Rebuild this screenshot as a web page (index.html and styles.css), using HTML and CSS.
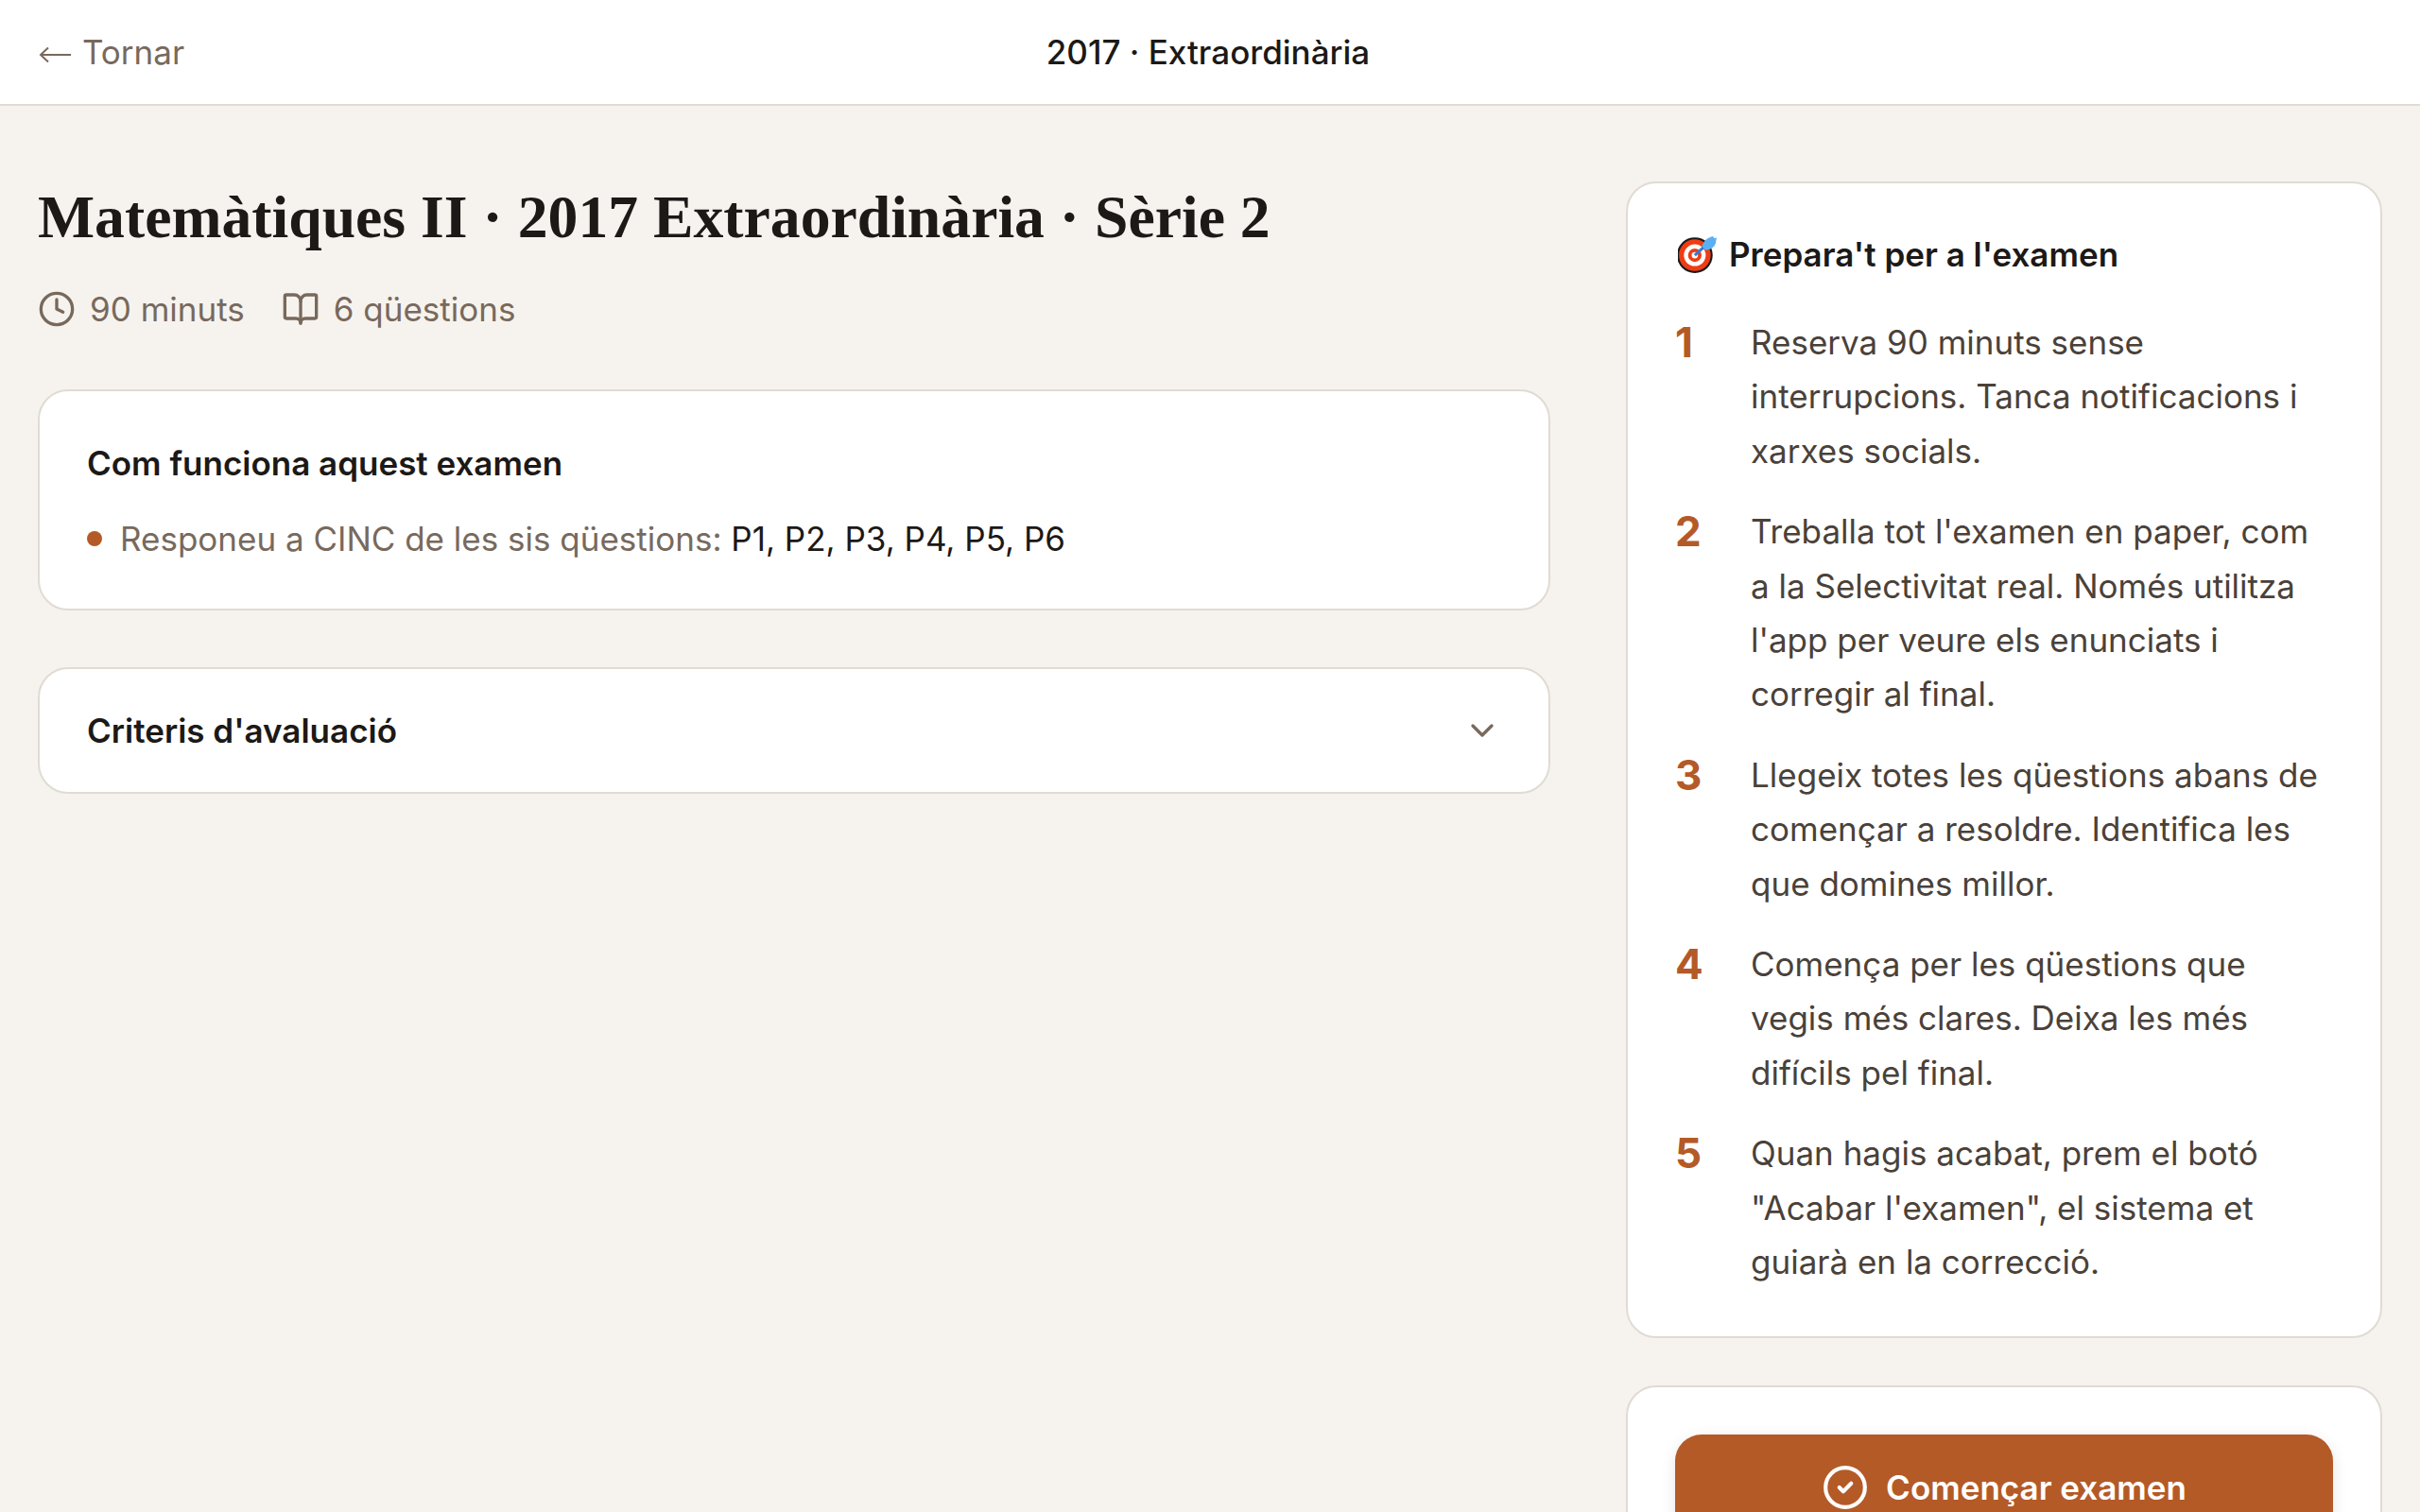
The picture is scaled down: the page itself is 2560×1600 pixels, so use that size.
FILE: index.html
```html
<!DOCTYPE html>
<html lang="ca">
<head>
<meta charset="UTF-8" />
<meta name="viewport" content="width=device-width, initial-scale=1" />
<title>Matemàtiques II · 2017 Extraordinària · Sèrie 2</title>
<link rel="stylesheet" href="styles.css">
</head>
<body>

<header class="topbar">
  <a class="back" href="#">
    <svg class="back-arrow" viewBox="0 0 34 18"><path d="M34 9H2M10 1.5 2 9l8 7.5"/></svg>
    Tornar
  </a>
  <div class="topbar-title">2017 · Extraordinària</div>
</header>

<main class="layout">
  <section class="main-col">
    <h1>Matemàtiques II · 2017 Extraordinària · Sèrie 2</h1>
    <div class="meta">
      <span class="meta-item">
        <svg class="meta-icon" viewBox="0 0 24 24"><circle cx="12" cy="12" r="10"/><path d="M12 6v6l4 2"/></svg>
        90 minuts
      </span>
      <span class="meta-item">
        <svg class="meta-icon" viewBox="0 0 24 24"><path d="M12 7v14"/><path d="M3 18a1 1 0 0 1-1-1V4a1 1 0 0 1 1-1h5a4 4 0 0 1 4 4 4 4 0 0 1 4-4h5a1 1 0 0 1 1 1v13a1 1 0 0 1-1 1h-6a3 3 0 0 0-3 3 3 3 0 0 0-3-3z"/></svg>
        6 qüestions
      </span>
    </div>

    <div class="card how">
      <h2>Com funciona aquest examen</h2>
      <ul class="rules">
        <li>Responeu a CINC de les sis qüestions: <span class="rule-list">P1, P2, P3, P4, P5, P6</span></li>
      </ul>
    </div>

    <div class="card criteria">
      <h2>Criteris d'avaluació</h2>
      <svg class="chevron" viewBox="0 0 24 24"><path d="m6 9 6 6 6-6"/></svg>
    </div>
  </section>

  <aside class="side-col">
    <div class="card prep">
      <h2 class="prep-title">
        <svg class="target" viewBox="0 0 40 40">
          <circle cx="17" cy="21" r="18" fill="#1a1a1a"/>
          <circle cx="17" cy="21" r="16" fill="#ee3d14"/>
          <circle cx="17" cy="21" r="11" fill="#fff"/>
          <circle cx="17" cy="21" r="6.8" fill="#ee3d14"/>
          <circle cx="17" cy="21" r="3.2" fill="#fff"/>
          <path d="M17 21 28 11" stroke="#2f7fd0" stroke-width="3"/>
          <path d="M24 12Q27 4 35 2L37 4 39 3 38 9Q36 15 28 16Z" fill="#5ab0f5"/>
        </svg>
        Prepara't per a l'examen
      </h2>
      <ol class="steps">
        <li><span class="step-num">1</span><p>Reserva 90 minuts sense interrupcions. Tanca notificacions i xarxes socials.</p></li>
        <li><span class="step-num">2</span><p>Treballa tot l'examen en paper, com a la Selectivitat real. Només utilitza l'app per veure els enunciats i corregir al final.</p></li>
        <li><span class="step-num">3</span><p>Llegeix totes les qüestions abans de començar a resoldre. Identifica les que domines millor.</p></li>
        <li><span class="step-num">4</span><p>Comença per les qüestions que vegis més clares. Deixa les més difícils pel final.</p></li>
        <li><span class="step-num">5</span><p>Quan hagis acabat, prem el botó "Acabar l'examen", el sistema et guiarà en la correcció.</p></li>
      </ol>
    </div>

    <div class="card start">
      <button class="start-btn">
        <svg class="start-icon" viewBox="0 0 24 24"><circle cx="12" cy="12" r="10"/><path d="m9 12 2 2 4-4"/></svg>
        Començar examen
      </button>
    </div>
  </aside>
</main>

</body>
</html>
```

FILE: styles.css
```css
html, body {
  height: 100%;
  overflow: hidden;
}
body {
  margin: 0;
  background-color: #f6f3ee;
  color: #1c1917;
  font-family: Inter, "Liberation Sans", sans-serif;
  font-size: 35px;
}
.topbar {
  position: relative;
  display: flex;
  align-items: center;
  justify-content: center;
  height: 110px;
  padding-right: 4px;
  background-color: #fff;
  border-bottom: 2px solid #e0dbd3;
}
.back {
  position: absolute;
  left: 41px;
  display: flex;
  align-items: center;
  gap: 12px;
  color: #78695c;
  text-decoration: none;
}
.back-arrow {
  width: 34px;
  height: 18px;
  margin-top: 6px;
  fill: none;
  stroke: #78695c;
  stroke-width: 2;
}
.topbar-title {
  font-weight: 500;
}
.layout {
  display: grid;
  grid-template-columns: 2fr 1fr;
  gap: 80px;
  padding: 80px 40px;
}
h1 {
  margin: 0;
  font-family: "Liberation Serif", serif;
  font-size: 63.7px;
  font-weight: 700;
  line-height: 76px;
}
.meta {
  display: flex;
  gap: 39px;
  margin-top: 31px;
  margin-bottom: 57px;
  color: #78695c;
  line-height: 56px;
}
.meta-item {
  display: flex;
  align-items: center;
  gap: 15px;
}
.meta-icon {
  width: 40px;
  height: 40px;
  fill: none;
  stroke: #78695c;
  stroke-width: 2;
  stroke-linecap: round;
  stroke-linejoin: round;
}
.card {
  background-color: #fff;
  border: 2px solid #e0dbd3;
  border-radius: 32px;
  padding: 48px 50px;
}
.card h2 {
  margin: 0;
  font-size: 35px;
  font-weight: 600;
  line-height: 56px;
}
.how {
  margin-bottom: 60px;
  padding-bottom: 46px;
}
.rules {
  list-style: none;
  margin: 24px 0 0;
  padding: 0;
}
.rules li {
  position: relative;
  padding-left: 35px;
  color: #78695c;
  line-height: 56px;
}
.rules li::before {
  content: "";
  position: absolute;
  left: 0;
  top: 20px;
  width: 16px;
  height: 16px;
  border-radius: 50%;
  background-color: #b45a27;
}
.rule-list {
  color: #1c1917;
}
.criteria {
  display: flex;
  align-items: center;
  justify-content: space-between;
  padding-top: 37px;
  padding-bottom: 37px;
}
.chevron {
  width: 40px;
  height: 40px;
  fill: none;
  stroke: #78695c;
  stroke-width: 2;
  stroke-linecap: round;
  stroke-linejoin: round;
}
.prep {
  margin-bottom: 50px;
  padding-top: 47px;
  padding-bottom: 49px;
}
.prep-title {
  display: flex;
  align-items: center;
  gap: 12px;
}
.target {
  width: 42px;
  height: 42px;
  margin-left: 3px;
}
.steps {
  display: flex;
  flex-direction: column;
  gap: 28px;
  list-style: none;
  margin: 37px 0 0;
  padding: 0;
}
.steps li {
  display: flex;
}
.step-num {
  flex: 0 0 80px;
  color: #b45a27;
  font-size: 44px;
  font-weight: 700;
  line-height: 57.4px;
}
.steps p {
  margin: 0;
  color: #4a4139;
  line-height: 57.4px;
}
.start {
  padding-top: 50px;
}
.start-btn {
  display: flex;
  align-items: center;
  justify-content: center;
  gap: 18px;
  width: 100%;
  height: 112px;
  background-color: #b45a27;
  border: none;
  border-radius: 28px;
  box-shadow: 0 4px 16px rgba(0,0,0,0.1);
  color: #fff;
  font-family: inherit;
  font-size: 35px;
  font-weight: 600;
  cursor: pointer;
}
.start-icon {
  width: 50px;
  height: 50px;
  fill: none;
  stroke: #fff;
  stroke-width: 2;
  stroke-linecap: round;
  stroke-linejoin: round;
}
```
